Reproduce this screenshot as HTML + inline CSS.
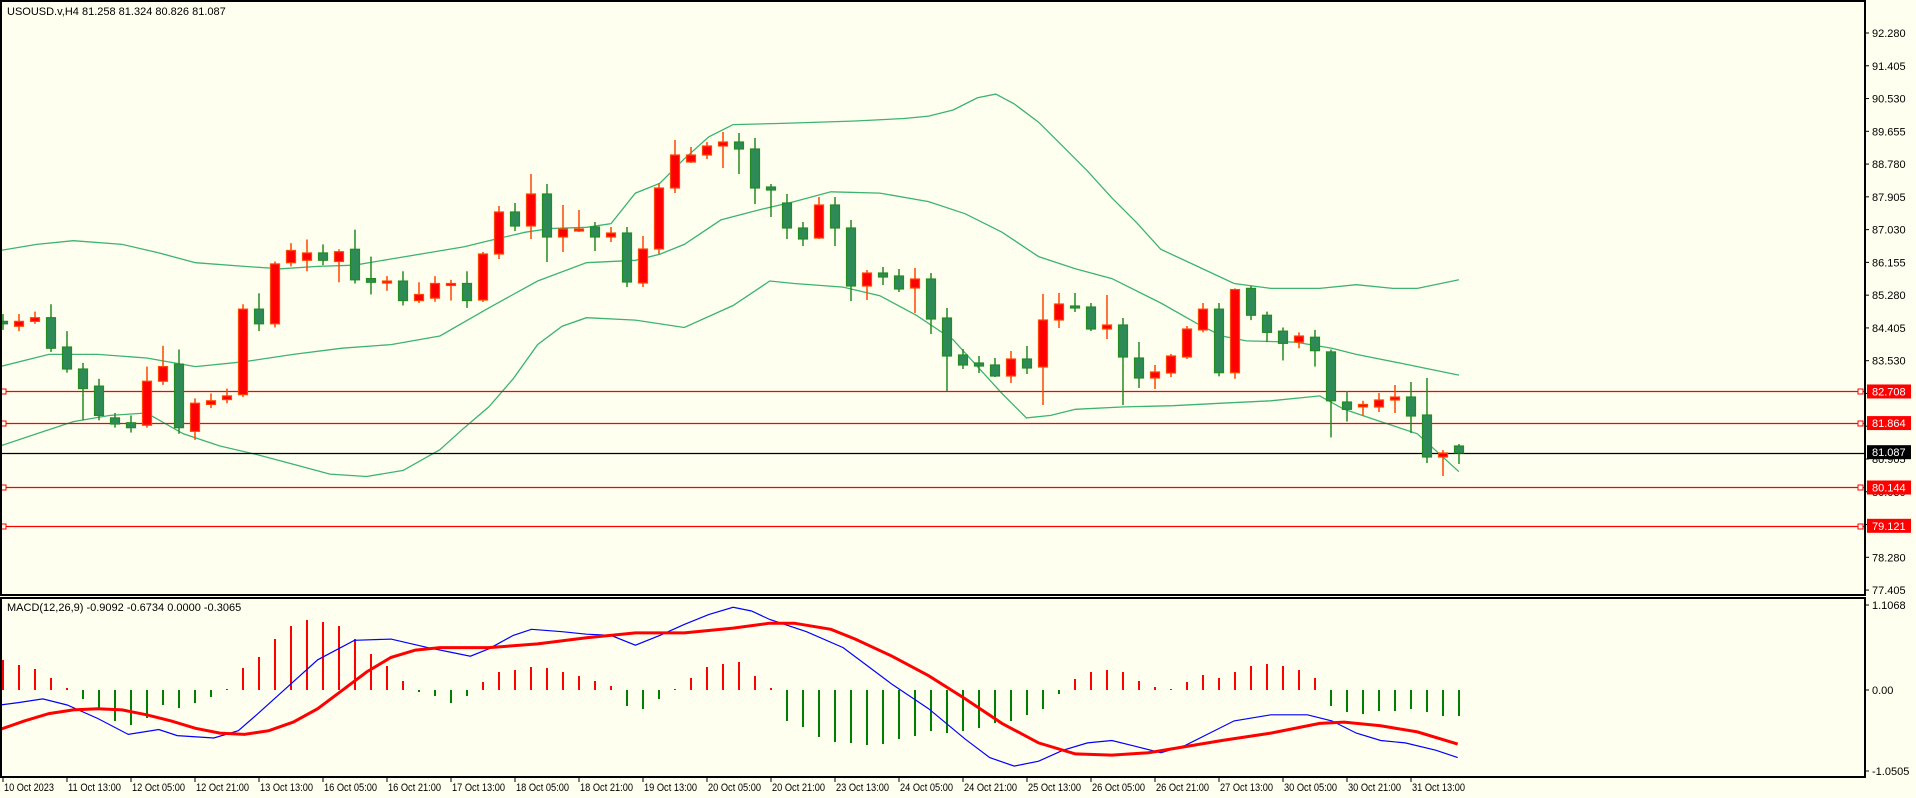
<!DOCTYPE html>
<html><head><meta charset="utf-8">
<style>
html,body{margin:0;padding:0;background:#FFFFF0;}
body{width:1916px;height:798px;overflow:hidden;position:relative;font-family:"Liberation Sans",Tahoma,sans-serif;}
svg{position:absolute;left:0;top:0;}
svg text{font-family:"Liberation Sans",sans-serif;font-size:11px;}
</style></head>
<body>
<svg id="s" width="1916" height="798" viewBox="0 0 1916 798" xmlns="http://www.w3.org/2000/svg">
<rect x="0" y="0" width="1916" height="798" fill="#FFFFF0"/>
<g id="bands" fill="none" stroke="#3CB371" stroke-width="1.3"></g>
<g id="hl"></g>
<g id="candles"></g>
<g id="macd"></g>
<g id="axis"></g>
<rect x="1" y="1" width="1864" height="594" fill="none" stroke="#000" stroke-width="2"/>
<rect x="1" y="598" width="1864" height="179" fill="none" stroke="#000" stroke-width="2"/>
<text x="7" y="15">USOUSD.v,H4  81.258 81.324 80.826 81.087</text>
<text x="7" y="611">MACD(12,26,9) -0.9092 -0.6734 0.0000 -0.3065</text>
</svg>
<script>
var NS="http://www.w3.org/2000/svg",K=1.2219;
function el(p,t,a,txt){var e=document.createElementNS(NS,t);for(var k in a)e.setAttribute(k,a[k]);if(txt!==undefined)e.textContent=txt;document.getElementById(p).appendChild(e);return e;}
function X(i){return 3+16*i;}
function P(p){return 33+(92.28-p)*37.45;}
var C=[
[263,265,257,270,0],[263,267,257,271,1],[260,263,255,265,1],[260,285,249,288,0],[284,302,271,305,0],
[302,318,297,344,0],[316,340,310,344,0],[342,347,338,350,0],[346,350,340,354,0],[312,348,300,350,1],
[300,312,283,315,1],[298,350,286,355,0],[330,353,326,360,1],[328,331,322,334,1],[324,327,318,330,1],
[253,323,249,325,1],[253,265,240,271,0],[216,265,214,268,1],[205,215,199,218,1],[207,213,196,222,1],
[207,213,200,217,0],[206,214,204,231,1],[204,229,188,232,0],[228,231,210,241,0],[230,231,226,238,1],
[230,246,222,250,0],[241,246,231,248,1],[232,244,226,247,1],[232,233,229,246,1],[232,246,222,252,0],
[254,300,252,302,1,1],[212,254,206,259,1,1],[212,226,203,231,0,1],[194,226,174,239,1,1],[194,237,184,262,0,1],
[229,237,205,252,1,1],[229,230,210,232,1,1],[227,237,222,251,0,1],[233,237,227,242,1,1],[233,282,227,287,0,1],
[249,283,236,287,1,1],[188,249,183,254,1,1],[155,188,140,193,1,1],[155,162,147,163,1,1],[146,155,142,159,1,1],
[142,146,132,168,1,1],[142,149,133,174,0,1],[149,188,138,204,0,1],[187,190,184,217,0,1],[203,228,194,239,0,1],
[228,239,222,246,0,1],[205,238,197,239,1,1],[205,228,197,246,0,1],[228,286,220,301,0,1],[273,286,270,300,1,1],
[273,277,267,285,0,1],[276,289,269,292,0,1],[279,288,268,313,1,1],[279,319,273,334,0,1],[318,356,308,391,0,1],
[355,365,349,369,0,1],[363,366,356,373,0,1],[365,376,358,377,0,1],[359,376,351,383,1,1],[359,368,346,374,0,1],
[320,367,294,405,1,1],[304,320,293,328,1,1],[306,308,293,312,0,1],[307,329,303,331,0,1],[325,329,295,339,1,1],
[325,357,318,405,0,1],[358,378,342,388,0,1],[372,378,365,389,1,1],[356,373,354,377,1,1],[329,357,326,359,1,1],
[253,270,248,272,1],[253,305,248,308,0],[237,305,236,310,1],[236,258,234,262,0],[258,272,255,280,0],
[271,281,268,295,0],[275,280,272,285,1],[276,287,270,300,0],[288,328,286,358,0],[329,335,320,345,0],
[331,333,328,340,1],[400,407,393,412,1,1],[397,400,385,413,1,1],[397,416,382,433,0,1],[415,457,378,463,0,1],
[453,457,450,476,1,1],[446,453,444,464,0,1]];
C.forEach(function(c,i){var f=c[5]?1:K,t=c[0]*f,b=c[1]*f,h=c[2]*f,l=c[3]*f,x=X(i);
 var bull=c[4],stroke=bull?"#FF4500":"#228B22",fill=bull?"#FF0000":"#2E8B57";
 el("candles","line",{x1:x,x2:x,y1:h,y2:l,stroke:stroke,"stroke-width":1.5});
 if(b-t<2)b=t+2;
 el("candles","rect",{x:x-4.5,y:t,width:9,height:b-t,fill:fill,stroke:stroke,"stroke-width":1.2});
});
function poly(pts,scale,g,attrs){var s=pts.map(function(p){return (p[0]*scale).toFixed(1)+","+(p[1]*scale).toFixed(1)}).join(" ");var a={points:s};for(var k in attrs)a[k]=attrs[k];el(g,"polyline",a);}
var up=[[0,205],[30,200],[60,197],[100,200],[130,207],[160,215],[200,218],[230,220],[260,218],[290,217],[320,212],[350,207],[380,202],[400,197],[430,190],[450,187],[480,186],[500,183],[520,158],[540,150],[560,130],[580,112],[600,102],[640,101],[700,99],[740,97],[760,95],[780,90],[800,80],[815,77],[830,85],[850,100],[870,120],[890,140],[910,162],[930,182],[950,204],[980,218],[1010,232],[1040,236],[1080,236],[1110,233],[1140,236],[1160,236],[1194,229]];
var mid=[[0,300],[40,290],[80,290],[120,293],[160,300],[200,296],[240,290],[280,285],[320,282],[360,275],[400,252],[440,230],[480,215],[520,213],[540,208],[560,200],[590,180],[620,172],[650,165],[680,157],[720,158],[760,165],[790,175],[820,190],[850,210],[880,220],[910,228],[950,248],[980,265],[1000,275],[1020,279],[1060,280],[1090,285],[1110,290],[1150,298],[1194,307]];
var lo=[[0,365],[30,355],[60,345],[90,340],[120,338],[150,355],[180,365],[210,372],[240,380],[270,388],[300,390],[330,385],[360,368],[380,350],[400,333],[420,310],[440,282],[460,267],[480,260],[520,262],[560,268],[600,250],[630,230],[650,232],[690,235],[720,242],[750,258],[780,278],[800,300],[820,322],[840,342],[860,340],[880,335],[920,333],[960,332],[1000,330],[1040,328],[1080,324],[1100,335],[1130,345],[1160,355],[1194,386]];
[up,mid,lo].forEach(function(a){poly(a,K,"bands",{});});
[[82.708,"#FF0000"],[81.864,"#FF0000"],[80.144,"#FF0000"],[79.121,"#FF0000"]].forEach(function(h){var y=Math.round(P(h[0]))+0.5;
 el("hl","line",{x1:2,x2:1865,y1:y,y2:y,stroke:h[1],"stroke-width":1.3});
 el("hl","rect",{x:1,y:y-2.5,width:5,height:5,fill:"#FFFFF0",stroke:h[1]});
 el("hl","rect",{x:1858,y:y-2.5,width:5,height:5,fill:"#FFFFF0",stroke:h[1]});
});
el("hl","line",{x1:2,x2:1865,y1:453.5,y2:453.5,stroke:"#000","stroke-width":1.3});
var pl=[92.280,91.405,90.530,89.655,88.780,87.905,87.030,86.155,85.280,84.405,83.530,82.655,81.780,80.905,80.030,79.155,78.280,77.405];
pl.forEach(function(p){var y=P(p);el("axis","line",{x1:1865,x2:1869,y1:y,y2:y,stroke:"#000"});el("axis","text",{x:1872,y:y+4,fill:"#000"},p.toFixed(3));});
[[82.708,"#FF0000"],[81.864,"#FF0000"],[81.087,"#000"],[80.144,"#FF0000"],[79.121,"#FF0000"]].forEach(function(h){var y=P(h[0]);
 el("axis","rect",{x:1867,y:y-7,width:44,height:14,fill:h[1]});
 el("axis","text",{x:1872,y:y+4,fill:"#fff"},h[0].toFixed(3));});
var Z=690;
var H=[660,665,669,678,688,699,710,721,725,718,705,708,703,697,690,668,657,639,626,620,622,626,639,654,666,681,692,696,703,696,682,
672,670,667,668,672,676,681,686,706,709,699,689,678,667,664,662,676,688,
721,727,737,742,743,745,744,739,736,731,733,731,728,723,721,715,709,694,
679,672,670,672,681,687,689,682,675,678,672,666,664,666,670,678,
706,712,714,711,711,709,712,716,716];
H.forEach(function(v,i){var x=X(i);if(Math.abs(v-Z)<1)v=Z-1;
 el("macd","line",{x1:x,x2:x,y1:Z,y2:v,stroke:v<Z?"#FF0000":"#008000","stroke-width":2});});
var blue=[[0,577],[15,575],[35,572],[55,577],[80,588],[105,601],[130,597],[145,602],[175,604],[195,598],[210,585],[230,567],[260,540],[290,524],[320,523],[350,530],[370,534],[385,537],[400,531],[420,520],[435,515],[460,517],[480,519],[500,520],[520,528],[540,520],[560,511],[580,503],[600,497],[615,500],[630,507],[660,517],[690,530],[710,545],[730,560],[760,580],[790,605],[810,620],[830,627],[850,623],[870,614],[890,608],[910,606],[930,611],[950,616],[970,610],[990,600],[1010,590],[1040,585],[1070,585],[1090,590],[1110,600],[1130,606],[1150,608],[1175,614],[1193,620]];
var red=[[0,597],[20,590],[40,584],[60,581],[80,580],[100,581],[120,585],[140,590],[160,596],[180,600],[200,601],[220,598],[240,591],[260,580],[280,565],[300,550],[320,538],[340,532],[360,530],[400,530],[440,527],[480,522],[520,518],[560,518],[600,514],[630,510],[650,510],[680,515],[700,523],[730,537],[760,553],[790,572],[820,592],[850,608],[880,617],[910,618],[940,616],[970,611],[1000,606],[1040,600],[1080,592],[1100,591],[1130,594],[1160,599],[1193,609]];
poly(blue,K,"macd",{fill:"none",stroke:"#0000FF","stroke-width":1.2});
poly(red,K,"macd",{fill:"none",stroke:"#FF0000","stroke-width":3});
[[1.1068,605],[0,690],[-1.0505,771]].forEach(function(m){el("axis","line",{x1:1865,x2:1869,y1:m[1],y2:m[1],stroke:"#000"});el("axis","text",{x:1872,y:m[1]+4,fill:"#000"},m[0]===0?"0.00":m[0].toFixed(4));});
var T=["10 Oct 2023","11 Oct 13:00","12 Oct 05:00","12 Oct 21:00","13 Oct 13:00","16 Oct 05:00","16 Oct 21:00","17 Oct 13:00","18 Oct 05:00","18 Oct 21:00","19 Oct 13:00","20 Oct 05:00","20 Oct 21:00","23 Oct 13:00","24 Oct 05:00","24 Oct 21:00","25 Oct 13:00","26 Oct 05:00","26 Oct 21:00","27 Oct 13:00","30 Oct 05:00","30 Oct 21:00","31 Oct 13:00"];
T.forEach(function(t,i){var x=3+64*i;el("axis","line",{x1:x,x2:x,y1:777,y2:782,stroke:"#000"});
 el("axis","text",{x:x+1,y:791,fill:"#000",textLength:(i==0?50:53),lengthAdjust:"spacingAndGlyphs"},t);});
</script>
</body></html>
